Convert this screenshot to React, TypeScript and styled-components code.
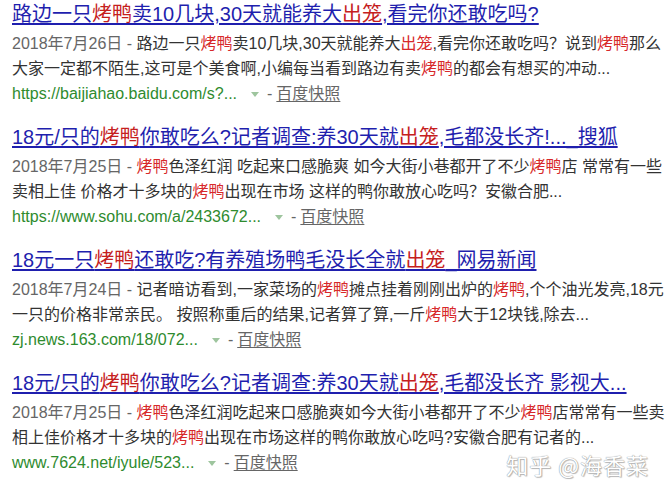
import styled, { createGlobalStyle } from "styled-components";

const GlobalStyle = createGlobalStyle`
  html, body {
    margin: 0;
    padding: 0;
    background: #ffffff;
    overflow: hidden;
  }
  body {
    font-family: "Liberation Sans", Arial, "Noto Sans CJK SC", sans-serif;
  }
`;

type Part = string | { em: string };

interface ResultData {
  title: Part[];
  date: string;
  line1: Part[];
  line2: Part[];
  url: string;
}

const results: ResultData[] = [
  {
    title: ["路边一只", { em: "烤鸭" }, "卖10几块,30天就能养大", { em: "出笼" }, ",看完你还敢吃吗?"],
    date: "2018年7月26日",
    line1: ["路边一只", { em: "烤鸭" }, "卖10几块,30天就能养大", { em: "出笼" }, ",看完你还敢吃吗？说到", { em: "烤鸭" }, "那么"],
    line2: ["大家一定都不陌生,这可是个美食啊,小编每当看到路边有卖", { em: "烤鸭" }, "的都会有想买的冲动..."],
    url: "https://baijiahao.baidu.com/s?...",
  },
  {
    title: ["18元/只的", { em: "烤鸭" }, "你敢吃么?记者调查:养30天就", { em: "出笼" }, ",毛都没长齐!..._搜狐"],
    date: "2018年7月25日",
    line1: [{ em: "烤鸭" }, "色泽红润 吃起来口感脆爽 如今大街小巷都开了不少", { em: "烤鸭" }, "店 常常有一些"],
    line2: ["卖相上佳 价格才十多块的", { em: "烤鸭" }, "出现在市场 这样的鸭你敢放心吃吗？安徽合肥..."],
    url: "https://www.sohu.com/a/2433672...",
  },
  {
    title: ["18元一只", { em: "烤鸭" }, "还敢吃?有养殖场鸭毛没长全就", { em: "出笼" }, "_网易新闻"],
    date: "2018年7月24日",
    line1: ["记者暗访看到,一家菜场的", { em: "烤鸭" }, "摊点挂着刚刚出炉的", { em: "烤鸭" }, ",个个油光发亮,18元"],
    line2: ["一只的价格非常亲民。 按照称重后的结果,记者算了算,一斤", { em: "烤鸭" }, "大于12块钱,除去..."],
    url: "zj.news.163.com/18/072...",
  },
  {
    title: ["18元/只的", { em: "烤鸭" }, "你敢吃么?记者调查:养30天就", { em: "出笼" }, ",毛都没长齐 影视大..."],
    date: "2018年7月25日",
    line1: [{ em: "烤鸭" }, "色泽红润吃起来口感脆爽如今大街小巷都开了不少", { em: "烤鸭" }, "店常常有一些卖"],
    line2: ["相上佳价格才十多块的", { em: "烤鸭" }, "出现在市场这样的鸭你敢放心吃吗?安徽合肥有记者的..."],
    url: "www.7624.net/iyule/523...",
  },
];

const Page = styled.div`
  position: relative;
  width: 666px;
  height: 482px;
  overflow: hidden;
  padding: 2px 0 0 12px;
  box-sizing: border-box;
`;

const Result = styled.div`
  margin-bottom: 19px;
`;

const Title = styled.a`
  display: block;
  white-space: nowrap;
  font-size: 20px;
  line-height: 24px;
  color: #1f1fae;
  text-decoration: underline;
  text-underline-offset: 2px;
  margin-bottom: 5px;
  cursor: pointer;
`;

const TitleEm = styled.em`
  font-style: normal;
  color: #c5201d;
`;

const Line = styled.div`
  white-space: nowrap;
  font-size: 16px;
  line-height: 25px;
  color: #333333;
`;

const SnippetEm = styled.em`
  font-style: normal;
  color: #d7282a;
`;

const DateText = styled.span`
  color: #666666;
`;

const UrlLine = styled(Line)`
  display: flex;
  align-items: center;
`;

const Url = styled.span`
  color: #2e8b2e;
`;

const Arrow = styled.span`
  display: inline-block;
  width: 0;
  height: 0;
  margin: 2px 8px 0 14px;
  border-left: 4px solid transparent;
  border-right: 4px solid transparent;
  border-top: 5px solid #9ec59e;
`;

const Dash = styled.span`
  color: #666666;
  margin-right: 4px;
`;

const Cache = styled.a`
  color: #666666;
  text-decoration: underline;
  text-underline-offset: 2px;
`;

const Watermark = styled.div`
  position: absolute;
  right: 17px;
  bottom: 6px;
  font-family: "Noto Sans CJK SC", sans-serif;
  font-size: 22px;
  line-height: 24px;
  color: #ffffff;
  text-shadow: 0 0 1px #9a9a9a, 0 0 1px #9a9a9a, 1px 1px 1px #bbbbbb;
  letter-spacing: 1px;
`;

const renderParts = (parts: Part[], Em: typeof TitleEm) =>
  parts.map((p, i) => (typeof p === "string" ? <span key={i}>{p}</span> : <Em key={i}>{p.em}</Em>));

const App = () => {
  return (
    <>
      <GlobalStyle />
      <Page>
        {results.map((r, idx) => (
          <Result key={idx}>
            <Title>{renderParts(r.title, TitleEm)}</Title>
            <Line>
              <DateText>{r.date} - </DateText>
              {renderParts(r.line1, SnippetEm)}
            </Line>
            <Line>{renderParts(r.line2, SnippetEm)}</Line>
            <UrlLine>
              <Url>{r.url}</Url>
              <Arrow />
              <Dash>-</Dash>
              <Cache>百度快照</Cache>
            </UrlLine>
          </Result>
        ))}
        <Watermark>知乎 @海香菜</Watermark>
      </Page>
    </>
  );
};

export default App;
